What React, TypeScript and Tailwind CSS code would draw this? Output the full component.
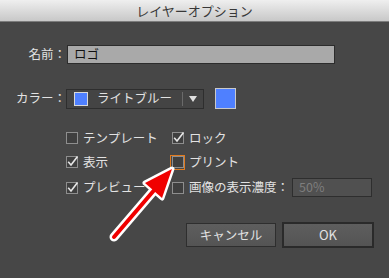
import React from 'react'

const font = { fontFamily: '"Noto Sans CJK JP", "Liberation Sans", sans-serif' }

function Box({ checked, highlight }: { checked?: boolean; highlight?: boolean }) {
  return (
    <div className={highlight ? 'flex h-[15px] w-[15px] items-center justify-center border border-[#e07a1f]' : 'flex h-[15px] w-[15px] items-center justify-center'}>
      <svg width="12" height="12" viewBox="0 0 12 12">
        <rect x="0.5" y="0.5" width="11" height="11" fill="#3f3f3f" stroke="#8e8e8e" />
        {checked && (
          <path d="M2.2 5.8 L5 9 L11.5 0.5" fill="none" stroke="#e6e6e6" strokeWidth="1.6" />
        )}
      </svg>
    </div>
  )
}

function Check({ label, checked, highlight }: { label: string; checked?: boolean; highlight?: boolean }) {
  return (
    <div className="flex items-center gap-[4px]">
      <Box checked={checked} highlight={highlight} />
      <span className="text-[12.5px] text-[#e2e2e2]">{label}</span>
    </div>
  )
}

export default function App() {
  return (
    <div className="relative h-[278px] w-[389px] overflow-hidden bg-[#474747]" style={font}>
      {/* title bar */}
      <div className="flex h-[22px] items-center justify-center border-b border-[#7c7c7c] bg-gradient-to-b from-[#efefef] to-[#c8c8c8] text-[13px] text-[#383838]">
        レイヤーオプション
      </div>

      {/* name */}
      <div className="mt-[23px] flex items-center">
        <div className="w-[66px] text-right text-[12.5px] text-[#e2e2e2]">名前：</div>
        <div className="ml-[1px] flex h-[19px] w-[268px] items-center border border-[#2c2c2c] bg-[#a9a9a9] pl-[6px] text-[12.5px] text-[#111]">
          ロゴ
        </div>
      </div>

      {/* color */}
      <div className="mt-[24px] flex items-center">
        <div className="w-[66px] text-right text-[12.5px] text-[#e2e2e2]">カラー：</div>
        <div className="flex h-[20px] w-[138px] items-center border border-[#2e2e2e] bg-[#444444]">
          <div className="ml-[7px] h-[14px] w-[14px] border border-[#d8d8d8] bg-[#4f80ff]" />
          <span className="ml-[9px] text-[12.5px] text-[#e2e2e2]">ライトブルー</span>
          <div className="ml-auto h-[14px] w-px bg-[#6a6a6a]" />
          <svg className="mx-[6px]" width="8" height="6" viewBox="0 0 8 6">
            <path d="M0 0 H8 L4 6 Z" fill="#e0e0e0" />
          </svg>
        </div>
        <div className="ml-[11px] h-[21px] w-[21px] border border-[#c9c9c9] bg-[#4f80ff]" />
      </div>

      {/* options */}
      <div className="mt-[17px] grid grid-cols-[106px_1fr] pl-[64px]">
        <div className="flex h-[24px] items-center">
          <Check label="テンプレート" />
        </div>
        <div className="flex h-[24px] items-center">
          <Check label="ロック" checked />
        </div>
        <div className="flex h-[24px] items-center">
          <Check label="表示" checked />
        </div>
        <div className="flex h-[24px] items-center">
          <Check label="プリント" highlight />
        </div>
        <div className="flex h-[27px] items-center">
          <Check label="プレビュー" checked />
        </div>
        <div className="flex h-[27px] items-center">
          <Check label="画像の表示濃度：" />
          <div className="ml-[3px] flex h-[19px] w-[80px] items-center border border-[#2e2e2e] bg-[#505050] pl-[6px] text-[12.5px] text-[#7e7e7e]">
            50%
          </div>
        </div>
      </div>

      {/* buttons */}
      <div className="mt-[21px] flex items-center justify-end gap-[6px] pr-[15px]">
        <button className="h-[24px] w-[90px] border border-[#2e2e2e] bg-gradient-to-b from-[#5e5e5e] to-[#545454] text-[12.5px] text-[#e2e2e2]">
          キャンセル
        </button>
        <button className="h-[26px] w-[92px] border-2 border-[#2a2a2a] bg-gradient-to-b from-[#5e5e5e] to-[#545454] text-[13px] text-[#e2e2e2]">
          OK
        </button>
      </div>

      {/* red arrow annotation */}
      <svg className="pointer-events-none absolute left-0 top-0" width="389" height="278" viewBox="0 0 389 278">
        <g strokeLinejoin="round" strokeLinecap="round">
          <line x1="114" y1="237" x2="156" y2="188" stroke="#ffffff" strokeWidth="9" />
          <polygon points="172,169 145,183 162,198" fill="#ffffff" stroke="#ffffff" strokeWidth="5" />
          <line x1="114" y1="237" x2="156" y2="188" stroke="#f00000" strokeWidth="4" />
          <polygon points="172,169 145,183 162,198" fill="#f00000" />
        </g>
      </svg>
    </div>
  )
}
